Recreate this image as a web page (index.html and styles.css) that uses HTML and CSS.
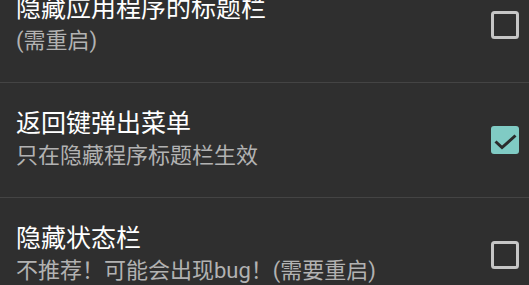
FILE: index.html
```html
<!DOCTYPE html>
<html lang="zh-CN">

<head>
  <meta charset="UTF-8" />
  <meta name="viewport" content="width=device-width, initial-scale=1.0" />
  <title>设置</title>
  <link rel="stylesheet" href="styles.css">
</head>

<body>
  <section class="list">
    <div class="pref">
      <div class="text">
        <div class="title">隐藏应用程序的标题栏</div>
        <div class="summary">(需重启)</div>
      </div>
      <svg class="box" width="28" height="28" viewBox="0 0 28 28">
        <rect x="1.5" y="1.5" width="25" height="25" rx="2" fill="none" stroke="#c6c6c6" stroke-width="3" />
      </svg>
    </div>
    <div class="pref">
      <div class="text">
        <div class="title">返回键弹出菜单</div>
        <div class="summary">只在隐藏程序标题栏生效</div>
      </div>
      <svg class="box" width="28" height="28" viewBox="0 0 28 28">
        <rect x="0" y="0" width="28" height="28" rx="3" fill="#80cbc4" />
        <polyline points="4.5,15.5 11,21.5 24.5,9.5" fill="none" stroke="#2b2b2b" stroke-width="3" />
      </svg>
    </div>
    <div class="pref">
      <div class="text">
        <div class="title">隐藏状态栏</div>
        <div class="summary">不推荐！可能会出现bug！(需要重启)</div>
      </div>
      <svg class="box" width="28" height="28" viewBox="0 0 28 28">
        <rect x="1.5" y="1.5" width="25" height="25" rx="2" fill="none" stroke="#c6c6c6" stroke-width="3" />
      </svg>
    </div>
  </section>
</body>

</html>
```

FILE: styles.css
```css
body,
html {
  height: 100%;
  overflow: hidden;
}

body {
  margin: 0;
  background-color: #2f2f2f;
  font-family: Roboto, "Noto Sans CJK SC", sans-serif;
}

.list {
  margin-top: -32px;
}

.pref {
  display: flex;
  align-items: center;
  height: 114px;
  padding: 0 10px 0 16px;
  border-bottom: 1px solid #444444;
}

.text {
  flex: 1;
}

.title {
  color: #ffffff;
  font-size: 25px;
  line-height: 32px;
}

.summary {
  color: #b2b2b2;
  font-size: 22px;
  line-height: 32px;
}

.box {
  display: block;
  flex: none;
}
```
